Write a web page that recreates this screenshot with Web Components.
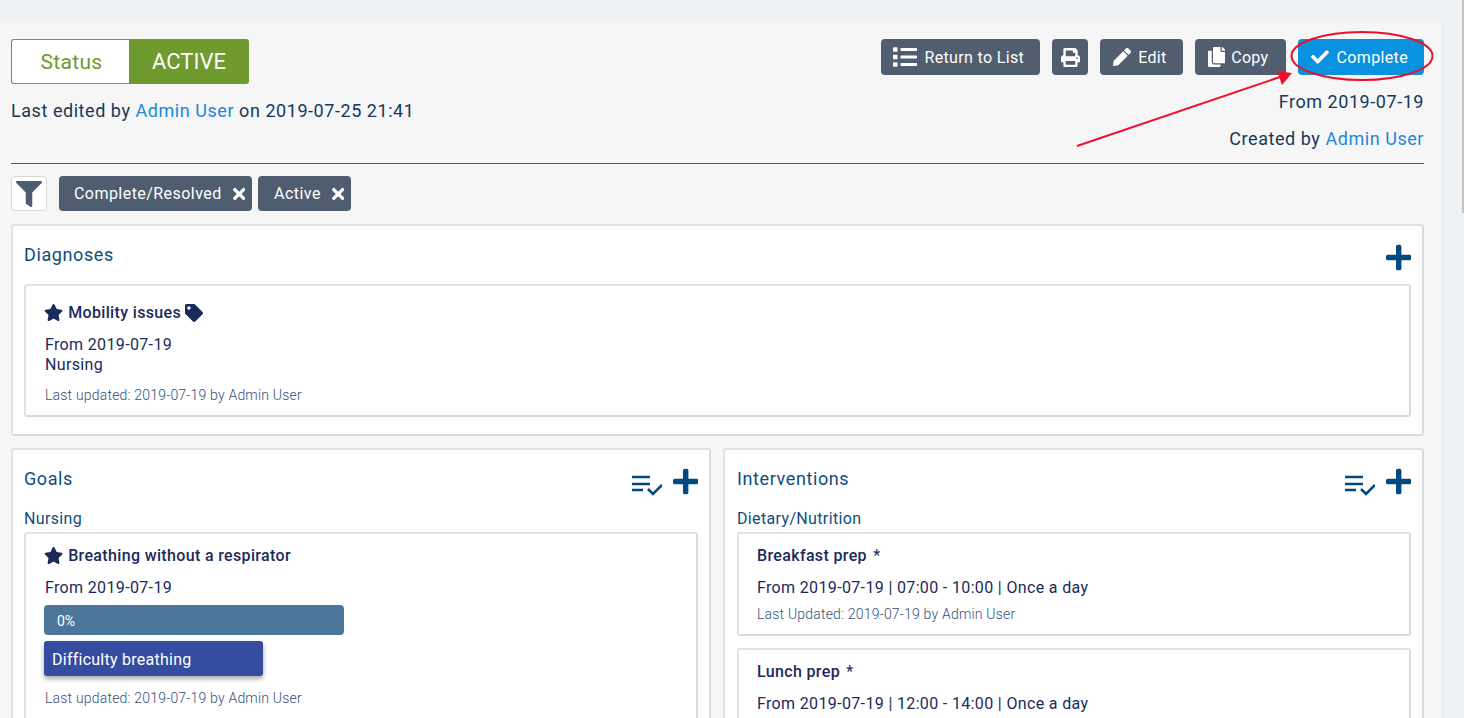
<!DOCTYPE html>
<html>
<head>
<meta charset="utf-8">
<style>
  html, body { margin: 0; height: 718px; overflow: hidden; background: #eff2f5; }
  body { font-family: Roboto, "Liberation Sans", sans-serif; position: relative; }
</style>
</head>
<body>
<care-plan></care-plan>
<script>
const ICONS = {
  list: [512, 'M80 368H16a16 16 0 0 0-16 16v64a16 16 0 0 0 16 16h64a16 16 0 0 0 16-16v-64a16 16 0 0 0-16-16zm0-320H16A16 16 0 0 0 0 64v64a16 16 0 0 0 16 16h64a16 16 0 0 0 16-16V64a16 16 0 0 0-16-16zm0 160H16a16 16 0 0 0-16 16v64a16 16 0 0 0 16 16h64a16 16 0 0 0 16-16v-64a16 16 0 0 0-16-16zm416 176H176a16 16 0 0 0-16 16v32a16 16 0 0 0 16 16h320a16 16 0 0 0 16-16v-32a16 16 0 0 0-16-16zm0-320H176a16 16 0 0 0-16 16v32a16 16 0 0 0 16 16h320a16 16 0 0 0 16-16V80a16 16 0 0 0-16-16zm0 160H176a16 16 0 0 0-16 16v32a16 16 0 0 0 16 16h320a16 16 0 0 0 16-16v-32a16 16 0 0 0-16-16z'],
  print: [512, 'M448 192V77.25c0-8.49-3.37-16.62-9.37-22.63L393.37 9.37c-6-6-14.14-9.37-22.63-9.37H96C78.33 0 64 14.33 64 32v160c-35.35 0-64 28.65-64 64v112c0 8.84 7.16 16 16 16h48v96c0 17.67 14.33 32 32 32h320c17.67 0 32-14.33 32-32v-96h48c8.84 0 16-7.16 16-16V256c0-35.35-28.65-64-64-64zm-64 256H128v-96h256v96zm0-224H128V64h192v48c0 8.84 7.16 16 16 16h48v96zm48 72c-13.25 0-24-10.75-24-24 0-13.26 10.75-24 24-24s24 10.74 24 24c0 13.25-10.75 24-24 24z'],
  pencil: [512, 'M497.9 142.1l-46.1 46.1c-4.7 4.7-12.3 4.7-17 0l-111-111c-4.7-4.7-4.7-12.3 0-17l46.1-46.1c18.7-18.7 49.1-18.7 67.9 0l60.1 60.1c18.8 18.7 18.8 49.1 0 67.9zM284.2 99.8L21.6 362.4.4 483.9c-2.9 16.4 11.4 30.6 27.8 27.8l121.5-21.3 262.6-262.6c4.7-4.7 4.7-12.3 0-17l-111-111c-4.8-4.7-12.4-4.7-17.1 0z'],
  copy: [448, 'M320 448v40c0 13.255-10.745 24-24 24H24c-13.255 0-24-10.745-24-24V120c0-13.255 10.745-24 24-24h72v296c0 30.879 25.121 56 56 56h168zm0-344V0H152c-13.255 0-24 10.745-24 24v368c0 13.255 10.745 24 24 24h272c13.255 0 24-10.745 24-24V128H344c-13.2 0-24-10.8-24-24zm120.971-31.029L375.029 7.029A24 24 0 0 0 358.059 0H352v96h96v-6.059a24 24 0 0 0-7.029-16.97z'],
  check: [512, 'M173.898 439.404l-166.4-166.4c-9.997-9.997-9.997-26.206 0-36.204l36.203-36.204c9.997-9.998 26.207-9.998 36.204 0L192 312.69 432.095 72.596c9.997-9.997 26.207-9.997 36.204 0l36.203 36.204c9.997 9.997 9.997 26.206 0 36.204l-294.4 294.401c-9.998 9.997-26.207 9.997-36.204-.001z'],
  times: [352, 'M242.72 256l100.07-100.07c12.28-12.28 12.28-32.19 0-44.48l-22.24-22.24c-12.28-12.28-32.19-12.28-44.48 0L176 189.28 75.93 89.21c-12.28-12.28-32.19-12.28-44.48 0L9.21 111.45c-12.28 12.28-12.28 32.19 0 44.48L109.28 256 9.21 356.07c-12.28 12.28-12.28 32.19 0 44.48l22.24 22.24c12.28 12.28 32.2 12.28 44.48 0L176 322.72l100.07 100.07c12.28 12.28 32.2 12.28 44.48 0l22.24-22.24c12.28-12.28 12.28-32.19 0-44.48L242.72 256z'],
  plus: [448, 'M416 208H272V64c0-17.67-14.33-32-32-32h-32c-17.67 0-32 14.33-32 32v144H32c-17.67 0-32 14.33-32 32v32c0 17.67 14.33 32 32 32h144v144c0 17.67 14.33 32 32 32h32c17.67 0 32-14.33 32-32V304h144c17.67 0 32-14.33 32-32v-32c0-17.67-14.33-32-32-32z'],
  filter: [512, 'M487.976 0H24.028C2.71 0-8.047 25.866 7.058 40.971L192 225.941V432c0 7.831 3.821 15.17 10.237 19.662l80 55.98C298.02 518.69 320 507.493 320 487.98V225.941l184.947-184.97C520.021 25.896 509.338 0 487.976 0z'],
  star: [576, 'M259.3 17.8L194 150.2 47.9 171.5c-26.2 3.8-36.7 36.1-17.7 54.6l105.7 103-25 145.5c-4.5 26.3 23.2 46 46.4 33.7L288 439.6l130.7 68.7c23.2 12.2 50.9-7.4 46.4-33.7l-25-145.5 105.7-103c19-18.5 8.5-50.8-17.7-54.6L382 150.2 316.7 17.8c-11.7-23.6-45.6-23.9-57.4 0z'],
  tag: [512, 'M0 252.118V48C0 21.49 21.49 0 48 0h204.118a48 48 0 0 1 33.941 14.059l211.882 211.882c18.745 18.745 18.745 49.137 0 67.882L293.823 497.941c-18.745 18.745-49.137 18.745-67.882 0L14.059 286.059A48 48 0 0 1 0 252.118zM112 64c-26.51 0-48 21.49-48 48s21.49 48 48 48 48-21.49 48-48-21.49-48-48-48z'],
};

class FaIcon extends HTMLElement {
  constructor() {
    super();
    this.attachShadow({ mode: 'open' });
  }
  connectedCallback() {
    const [w, d] = ICONS[this.getAttribute('name')];
    const size = this.getAttribute('size') || 16;
    this.shadowRoot.innerHTML = `
      <style>:host { display: inline-flex; flex: none; } svg { display: block; fill: currentColor; }</style>
      <svg height="${size}" width="${size * w / 512}" viewBox="0 0 ${w} 512"><path d="${d}"/></svg>`;
  }
}
customElements.define('fa-icon', FaIcon);

const statusTemplate = document.createElement('template');
statusTemplate.innerHTML = `
  <style>
  :host { display: flex; width: 238px; height: 45px; font-size: 22px; box-sizing: border-box; letter-spacing: 0; }
  .label, .value { display: flex; align-items: center; justify-content: center; }
  .label { width: 118px; box-sizing: border-box; padding-left: 2px; background: #fff; color: #6f9a2e; border: 1px solid #6f9a2e; border-right: 0; border-radius: 3px 0 0 3px; font-size: 21px; letter-spacing: .3px; }
  .value { width: 120px; background: #6f9a2e; color: #fff; border-radius: 0 3px 3px 0; }
  </style>
  <div class="label">Status</div><div class="value"><slot></slot></div>
`;
class StatusBadge extends HTMLElement {
  constructor() {
    super();
    this.attachShadow({ mode: 'open' }).appendChild(statusTemplate.content.cloneNode(true));
  }
}
customElements.define('status-badge', StatusBadge);

const buttonTemplate = document.createElement('template');
buttonTemplate.innerHTML = `
  <style>
  :host { display: inline-flex; align-items: center; justify-content: center; gap: 8px; height: 36px; box-sizing: border-box; background: #505e6f; color: #fff; border-radius: 4px; font-size: 16px; letter-spacing: .35px; padding: 0 16px 0 13px; }
  :host([primary]) { background: #0992e0; }
  </style>
  <slot></slot>
`;
class ActionButton extends HTMLElement {
  constructor() {
    super();
    this.attachShadow({ mode: 'open' }).appendChild(buttonTemplate.content.cloneNode(true));
  }
}
customElements.define('action-button', ActionButton);

const chipTemplate = document.createElement('template');
chipTemplate.innerHTML = `
  <style>
  :host { display: inline-flex; align-items: center; gap: 11px; height: 35px; box-sizing: border-box; background: #4f5d70; color: #fff; border-radius: 4px; font-size: 16px; letter-spacing: .45px; padding: 0 7px 0 15px; }
  </style>
  <slot></slot><fa-icon name="times" size="18"></fa-icon>
`;
class FilterChip extends HTMLElement {
  constructor() {
    super();
    this.attachShadow({ mode: 'open' }).appendChild(chipTemplate.content.cloneNode(true));
  }
}
customElements.define('filter-chip', FilterChip);

const sectionTemplate = document.createElement('template');
sectionTemplate.innerHTML = `
  <style>
  :host { display: block; box-sizing: border-box; background: #fff; border: 2px solid #e2e2e2; border-right-color: #dadada; border-bottom-color: #dadada; border-radius: 3px; padding: 0 11px; color: #0f4c7c; min-width: 0; }
  header { display: flex; justify-content: space-between; align-items: flex-start; height: 58px; padding-top: 18px; box-sizing: border-box; }
  h2 { margin: 0; font-size: 18px; font-weight: 400; line-height: 22px; letter-spacing: .6px; }
  .tools { display: flex; align-items: center; gap: 11px; margin-top: -1px; color: #004a7f; }
  </style>
  <header><h2><slot name="title"></slot></h2><div class="tools"><slot name="tools"></slot></div></header>
  <slot></slot>
`;
class SectionCard extends HTMLElement {
  constructor() {
    super();
    this.attachShadow({ mode: 'open' }).appendChild(sectionTemplate.content.cloneNode(true));
  }
}
customElements.define('section-card', SectionCard);

const itemTemplate = document.createElement('template');
itemTemplate.innerHTML = `
  <style>
  :host { display: block; box-sizing: border-box; background: #fff; border: 2px solid #e2e2e2; border-right-color: #dadada; border-bottom-color: #dadada; border-radius: 3px; padding: 11px 19px 11px; color: #1b2a5c; font-size: 16px; line-height: 20px; letter-spacing: .35px; }
  .title { display: flex; align-items: center; gap: 5px; font-weight: 500; height: 21px; }
  .body { display: block; margin-top: 12px; }
  </style>
  <div class="title"><slot name="title"></slot></div>
  <div class="body"><slot></slot></div>
`;
class ItemCard extends HTMLElement {
  constructor() {
    super();
    this.attachShadow({ mode: 'open' }).appendChild(itemTemplate.content.cloneNode(true));
  }
}
customElements.define('item-card', ItemCard);

const updatedTemplate = document.createElement('template');
updatedTemplate.innerHTML = `
  <style>
  :host { display: block; color: #33507c; font-size: 14px; font-weight: 300; line-height: 18px; margin-top: 11px; letter-spacing: .2px; }
  </style>
  <slot></slot>
`;
class UpdatedNote extends HTMLElement {
  constructor() {
    super();
    this.attachShadow({ mode: 'open' }).appendChild(updatedTemplate.content.cloneNode(true));
  }
}
customElements.define('updated-note', UpdatedNote);

const playlistIcon = `<svg width="30" height="28" viewBox="0 0 30 28" style="display:block" fill="none" stroke="currentColor"><path d="M0 9h18M0 16h18M0 22h11" stroke-width="2.3"/><path d="M16 21l5 5 9-9" stroke-width="2.6"/></svg>`;

const pageTemplate = document.createElement('template');
pageTemplate.innerHTML = `
  <style>
  :host { display: block; width: 1464px; height: 718px; box-sizing: border-box; padding-top: 21px; color: #15395b; }
  main { background: #f6f6f6; width: 1443px; height: 697px; padding: 18px 18px 0 11px; box-sizing: border-box; overflow: hidden; border-right: 1px solid #e6e8eb; }
  a { color: #1d87d9; text-decoration: none; }
  .top { display: flex; justify-content: space-between; height: 124px; border-bottom: 1px solid #4a5568; font-size: 18px; letter-spacing: .55px; }
  .edited { margin-top: 15px; line-height: 24px; }
  .right { text-align: right; }
  .right div { line-height: 24px; margin-bottom: 13px; }
  .right .actions { display: flex; justify-content: flex-end; gap: 12px; margin-bottom: 15px; line-height: normal; letter-spacing: 0; }
  .filters { display: flex; align-items: center; gap: 6px; height: 35px; margin-top: 12px; }
  .filter { display: flex; align-items: center; justify-content: center; width: 36px; height: 35px; box-sizing: border-box; background: #fff; border: 1px solid #d8d8d8; border-radius: 4px; color: #4f5d70; margin-right: 6px; }
  .diag { margin-top: 13px; height: 212px; }
  .diag item-card { padding-top: 16px; }
  .cols { display: grid; grid-template-columns: 700px 701px; gap: 12px; margin-top: 12px; }
  .cols section-card { height: 400px; }
  .cols section-card + section-card { padding-left: 12px; }
  .cols section-card + section-card item-card { padding-left: 18px; }
  .group { font-size: 16px; line-height: 20px; padding-top: 1px; margin: 0 0 3px; letter-spacing: .35px; }
  .star { margin-left: -1px; }
  .mark { font-weight: 400; margin-left: 2px; }
  .bar { width: 300px; height: 30px; box-sizing: border-box; background: #4c779b; color: #fff; border-radius: 4px; font-size: 14px; line-height: 33px; padding-left: 13px; letter-spacing: 0; margin: 7px 0 6px -1px; }
  .pill { width: 219px; height: 35px; box-sizing: border-box; background: #344da0; color: #fff; border-radius: 3px; box-shadow: 0 3px 5px rgba(0,0,0,.35); line-height: 37px; padding-left: 8px; margin-left: -1px; letter-spacing: .25px; }
  item-card + item-card { margin-top: 12px; }
  .overlay { position: absolute; left: 0; top: 0; pointer-events: none; }
  .thumb { position: absolute; right: 0; top: 0; width: 2px; height: 213px; background: #c4c4c4; }
  </style>
  <main>
    <div class="top">
      <div>
        <status-badge>ACTIVE</status-badge>
        <div class="edited">Last edited by <a href="#">Admin User</a> on 2019-07-25 21:41</div>
      </div>
      <div class="right">
        <div class="actions">
          <action-button style="gap:7px;padding:0 16px 0 12px"><fa-icon name="list" size="24"></fa-icon>Return to List</action-button>
          <action-button style="padding:0 8.5px"><fa-icon name="print" size="19"></fa-icon></action-button>
          <action-button style="gap:7px"><fa-icon name="pencil" size="18"></fa-icon>Edit</action-button>
          <action-button style="gap:6px;padding-right:17px"><fa-icon name="copy" size="20"></fa-icon>Copy</action-button>
          <action-button primary><fa-icon name="check" size="18"></fa-icon>Complete</action-button>
        </div>
        <div>From 2019-07-19</div>
        <div>Created by <a href="#">Admin User</a></div>
      </div>
    </div>
    <div class="filters">
      <div class="filter"><fa-icon name="filter" size="26"></fa-icon></div>
      <filter-chip>Complete/Resolved</filter-chip>
      <filter-chip style="padding-left:16px">Active</filter-chip>
    </div>
    <section-card class="diag">
      <span slot="title">Diagnoses</span>
      <fa-icon slot="tools" name="plus" size="29"></fa-icon>
      <item-card>
        <fa-icon slot="title" class="star" name="star" size="17"></fa-icon>
        <span slot="title">Mobility issues</span>
        <fa-icon slot="title" name="tag" size="18" style="margin-left:-1px"></fa-icon>
        <div>From 2019-07-19</div>
        <div>Nursing</div>
        <updated-note>Last updated: 2019-07-19 by Admin User</updated-note>
      </item-card>
    </section-card>
    <div class="cols">
      <section-card>
        <span slot="title">Goals</span>
        <span slot="tools" class="playlist"></span>
        <fa-icon slot="tools" name="plus" size="29"></fa-icon>
        <div class="group">Nursing</div>
        <item-card>
          <fa-icon slot="title" class="star" name="star" size="17"></fa-icon>
          <span slot="title">Breathing without a respirator</span>
          <div>From 2019-07-19</div>
          <div class="bar">0%</div>
          <div class="pill">Difficulty breathing</div>
          <updated-note style="margin-top:13px">Last updated: 2019-07-19 by Admin User</updated-note>
        </item-card>
      </section-card>
      <section-card>
        <span slot="title">Interventions</span>
        <span slot="tools" class="playlist"></span>
        <fa-icon slot="tools" name="plus" size="29"></fa-icon>
        <div class="group">Dietary/Nutrition</div>
        <item-card>
          <span slot="title">Breakfast prep <span class="mark">*</span></span>
          <div>From 2019-07-19 | 07:00 - 10:00 | Once a day</div>
          <updated-note style="margin-top:7px">Last Updated: 2019-07-19 by Admin User</updated-note>
        </item-card>
        <item-card>
          <span slot="title">Lunch prep <span class="mark">*</span></span>
          <div>From 2019-07-19 | 12:00 - 14:00 | Once a day</div>
        </item-card>
      </section-card>
    </div>
  </main>
  <div class="thumb"></div>
  <svg class="overlay" width="1464" height="718" fill="none">
    <ellipse cx="1362" cy="56" rx="70.5" ry="24" stroke="#e8112d" stroke-width="2"/>
    <path d="M1077 146L1280 77" stroke="#f0102b" stroke-width="2"/>
    <path d="M1292 73L1277 71L1282 85Z" fill="#f0102b"/>
  </svg>
`;
class CarePlan extends HTMLElement {
  constructor() {
    super();
    const shadow = this.attachShadow({ mode: 'open' });
    shadow.appendChild(pageTemplate.content.cloneNode(true));
    shadow.querySelectorAll('.playlist').forEach((el) => { el.innerHTML = playlistIcon; });
  }
}
customElements.define('care-plan', CarePlan);
</script>
</body>
</html>
